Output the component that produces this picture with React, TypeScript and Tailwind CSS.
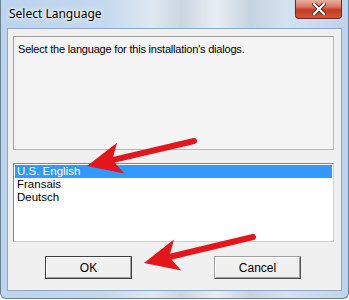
import React from "react";

const ui = { fontFamily: '"Liberation Sans", Arial, sans-serif' };

function Arrow({ tail, tip }: { tail: [number, number]; tip: [number, number] }) {
  const [x1, y1] = tail;
  const [x2, y2] = tip;
  const ang = Math.atan2(y2 - y1, x2 - x1);
  const len = 38;
  const spread = 0.43;
  const b1 = [x2 - len * Math.cos(ang - spread), y2 - len * Math.sin(ang - spread)];
  const b2 = [x2 - len * Math.cos(ang + spread), y2 - len * Math.sin(ang + spread)];
  const neck = [x2 - 26 * Math.cos(ang), y2 - 26 * Math.sin(ang)];
  return (
    <g>
      <line x1={x1} y1={y1} x2={neck[0]} y2={neck[1]} stroke="#e3161b" strokeWidth={6} strokeLinecap="round" />
      <polygon points={`${x2},${y2} ${b1[0]},${b1[1]} ${neck[0]},${neck[1]} ${b2[0]},${b2[1]}`} fill="#e3161b" />
    </g>
  );
}

function Button({ label, isDefault }: { label: string; isDefault?: boolean }) {
  return (
    <div
      className={`w-[87px] h-[23px] flex items-center justify-center text-[12px] text-black bg-[#f0f0f0] border ${
        isDefault ? "border-[#404040]" : "border-[#a0a0a0] border-r-[#505050] border-b-[#505050]"
      }`}
      style={ui}
    >
      <div className="w-full h-full flex items-center justify-center border border-white border-r-[#a0a0a0] border-b-[#a0a0a0]">
        {label}
      </div>
    </div>
  );
}

export default function App() {
  return (
    <div className="relative w-[349px] h-[300px] overflow-hidden bg-white">
      <div className="w-[349px] h-[299px] flex flex-col border border-[#6d7f93] border-t-0 rounded-br-[6px] rounded-bl-[6px] bg-[linear-gradient(90deg,#bcd4ec_0%,#c4d9ee_30%,#dfe8f1_44%,#cbd6e1_52%,#e8eef4_62%,#c6d3e0_72%,#d4e2f0_82%,#bcd4ec_100%)]">
        {/* title bar */}
        <div className="h-[28px] flex items-start justify-between pl-[8px]">
          <span
            className="mt-[5px] text-[12px] text-black"
            style={{ fontFamily: '"Noto Sans", "Open Sans", sans-serif', textShadow: "0 0 6px #fff, 0 0 3px #fff" }}
          >
            Select Language
          </span>
          <div className="mr-[6px] w-[47px] h-[19px] rounded-b-[4px] border border-t-0 border-[#6e2a20] bg-[linear-gradient(180deg,#eab0a0_0%,#d8735f_40%,#c23d24_55%,#d4553a_100%)] flex items-center justify-center">
            <svg width="14" height="12" viewBox="0 0 14 12">
              <path d="M2 1 L12 11 M12 1 L2 11" stroke="#5a1a12" strokeWidth="4" strokeLinecap="square" />
              <path d="M2 1 L12 11 M12 1 L2 11" stroke="#ffffff" strokeWidth="2.2" strokeLinecap="square" />
            </svg>
          </div>
        </div>

        {/* client area */}
        <div className="mx-[6px] mb-[7px] flex-1 flex flex-col bg-[#f0f0f0] border border-[#8fa7c0] pt-[7px] pl-[5px] pr-[7px]" style={ui}>
          <div className="h-[114px] bg-[#f4f4f4] border border-[#a0a0a0] border-r-[#b8b8b8] border-b-[#b8b8b8] px-[4px] pt-[4px] text-[11px] text-black tracking-[-0.2px]">
            Select the language for this installation's dialogs.
          </div>
          <div className="mt-[13px] h-[79px] bg-white border border-[#828790] border-r-[#d0d0d0] border-b-[#d0d0d0] text-[11.5px] leading-[13px] p-[1px]">
            <div className="bg-[#3399ff] text-white pl-[2px] h-[13px]">U.S. English</div>
            <div className="text-black pl-[2px] h-[13px]">Fransais</div>
            <div className="text-black pl-[2px] h-[13px]">Deutsch</div>
          </div>
          <div className="mt-[14px] flex justify-between pl-[32px] pr-[33px]">
            <Button label="OK" isDefault />
            <Button label="Cancel" />
          </div>
        </div>
      </div>

      <svg className="absolute inset-0 pointer-events-none" width="349" height="300" viewBox="0 0 349 300">
        <Arrow tail={[194, 141]} tip={[87, 166]} />
        <Arrow tail={[253, 237]} tip={[144, 263]} />
      </svg>
    </div>
  );
}
